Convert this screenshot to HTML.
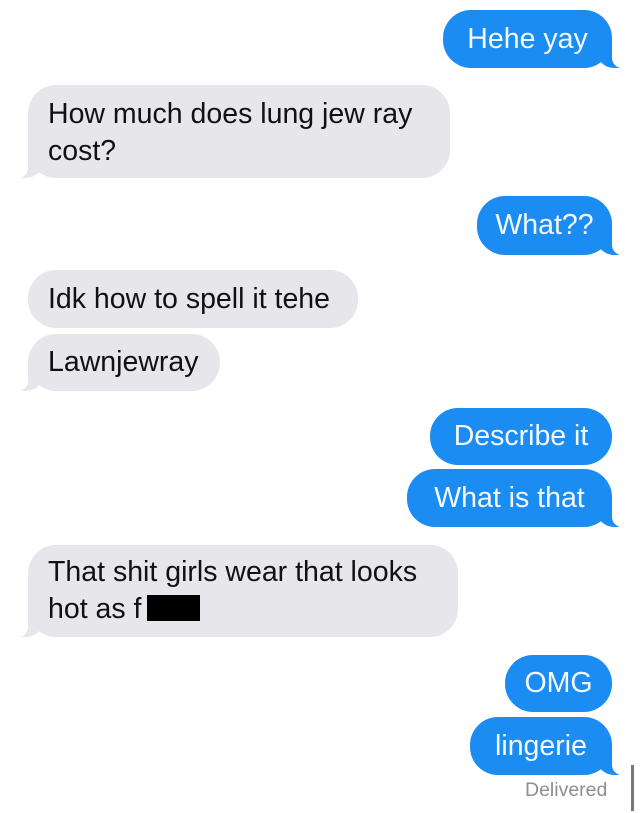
<!DOCTYPE html>
<html><head><meta charset="utf-8"><style>
body{margin:0;width:640px;height:813px;background:#fff;position:relative;overflow:hidden;font-family:"Liberation Sans",sans-serif;}
.b{position:absolute;box-sizing:border-box;border-radius:28px;font-size:28.5px;line-height:37px;padding:0 20px;display:flex;align-items:center;white-space:nowrap;}
.g{background:#e6e6eb;color:#111;}
.u{background:#1b8cf2;color:#f4f8ff;justify-content:center;padding:0;}
.t::before,.t::after{content:"";position:absolute;bottom:0;height:26px;}
.u.t::before{right:-8px;width:22px;background:#1b8cf2;border-bottom-left-radius:16px 14px;}
.u.t::after{right:-26px;width:26px;background:#fff;border-bottom-left-radius:10px;}
.g.t::before{left:-8px;width:22px;background:#e6e6eb;border-bottom-right-radius:16px 14px;}
.g.t::after{left:-26px;width:26px;background:#fff;border-bottom-right-radius:10px;}
</style></head><body>
<div class="b u t" style="left:443px;top:10px;width:169px;height:58px;">Hehe yay</div>
<div class="b g t" style="left:28px;top:85px;width:422px;height:93px;padding-top:2px;">How much does lung jew ray<br>cost?</div>
<div class="b u t" style="left:477px;top:196px;width:135px;height:59px;">What??</div>
<div class="b g" style="left:28px;top:270px;width:330px;height:58px;">Idk how to spell it tehe</div>
<div class="b g t" style="left:28px;top:334px;width:192px;height:57px;">Lawnjewray</div>
<div class="b u" style="left:430px;top:408px;width:182px;height:57px;">Describe it</div>
<div class="b u t" style="left:407px;top:469px;width:205px;height:58px;">What is that</div>
<div class="b g t" style="left:28px;top:545px;width:430px;height:92px;">That shit girls wear that looks<br>hot as f</div>
<div style="position:absolute;left:147px;top:595px;width:53px;height:26px;background:#000;"></div>
<div class="b u" style="left:505px;top:655px;width:107px;height:57px;">OMG</div>
<div class="b u t" style="left:470px;top:717px;width:142px;height:58px;">lingerie</div>
<div style="position:absolute;left:525px;top:779px;font-size:19.5px;color:#8e8e93;">Delivered</div>
<div style="position:absolute;left:631px;top:765px;width:3px;height:46px;background:#777;"></div>
</body></html>
